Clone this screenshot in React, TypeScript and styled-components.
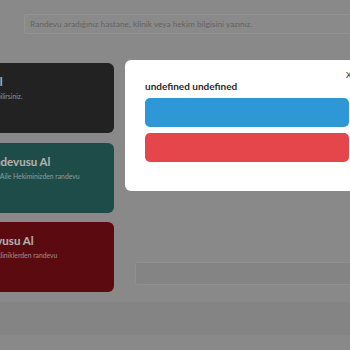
import styled, { createGlobalStyle } from "styled-components";

const GlobalStyle = createGlobalStyle`
  html, body {
    margin: 0;
    padding: 0;
    background: #c5c5c5;
    font-family: Lato, "Open Sans", sans-serif;
    overflow: hidden;
  }
`;

const Page = styled.div`
  position: relative;
  width: 350px;
  height: 350px;
  overflow: hidden;
  background: #c5c5c5;
`;

const Header = styled.div`
  height: 45px;
  padding: 11px 0 0 24px;
  box-sizing: border-box;
`;

const Search = styled.input`
  width: 360px;
  height: 20px;
  box-sizing: border-box;
  border: 1px solid #d3d3d3;
  border-radius: 3px;
  background: #c6c6c6;
  padding: 0 5px;
  font-family: Lato, sans-serif;
  font-size: 8.3px;
  outline: none;

  &::placeholder {
    color: #8e8e8e;
  }
`;

const Main = styled.div`
  display: grid;
  grid-template-columns: 209px 240px;
  column-gap: 21px;
  margin-left: -95px;
  padding-top: 18px;
`;

const CardList = styled.div`
  display: flex;
  flex-direction: column;
  gap: 9.5px;
`;

const Card = styled.div<{ $bg: string }>`
  height: 70px;
  box-sizing: border-box;
  padding: 12px 20px 12px 14px;
  border-radius: 6px;
  background: ${(p) => p.$bg};
  color: #ffffff;
  overflow: hidden;
`;

const CardTitle = styled.div`
  font-size: 11.5px;
  font-weight: 700;
  line-height: 14px;
  white-space: nowrap;
`;

const CardText = styled.p`
  margin: 2px 0 0;
  font-size: 6.8px;
  line-height: 10px;
  color: rgba(255, 255, 255, 0.75);
`;

const Line = styled.span`
  display: block;
  white-space: nowrap;
`;

const Side = styled.div`
  padding-top: 199px;
`;

const NoteBox = styled.div`
  height: 21px;
  border: 1px solid #cdcdcd;
  border-radius: 3px;
  background: #bdbdbd;
`;

const Footer = styled.div`
  margin-top: 10px;
  height: 33px;
  background: #bdbdbd;
`;

const Backdrop = styled.div`
  position: absolute;
  inset: 0;
  background: rgba(0, 0, 0, 0.3);
`;

const Modal = styled.div`
  position: absolute;
  left: 125px;
  top: 60px;
  width: 244px;
  height: 131px;
  box-sizing: border-box;
  padding: 20px 20px 0;
  background: #ffffff;
  border-radius: 6px;
  display: flex;
  flex-direction: column;
  gap: 6px;
`;

const Close = styled.span`
  position: absolute;
  top: 8px;
  right: 17px;
  font-size: 11px;
  color: #555;
  font-family: "DejaVu Sans", sans-serif;
`;

const ModalTitle = styled.div`
  font-size: 10px;
  font-weight: 700;
  color: #2b2b2b;
  line-height: 12px;
`;

const ActionButton = styled.button<{ $bg: string }>`
  height: 29px;
  border: none;
  border-radius: 5px;
  background: ${(p) => p.$bg};
  cursor: pointer;
`;

const cards = [
  {
    bg: "#313131",
    title: "Hızlı Randevu Al",
    lines: ["Hemen online randevu alabilirsiniz."],
  },
  {
    bg: "#2c6e68",
    title: "Aile Hekimi Randevusu Al",
    lines: ["Sistemde kayıtlı olduğunuz Aile Hekiminizden randevu", "alabilirsiniz."],
  },
  {
    bg: "#831117",
    title: "Hastane Randevusu Al",
    lines: ["Devlet hastaneleri ve özel kliniklerden randevu", "alabilirsiniz."],
  },
];

export default function App() {
  const user: any = {};
  return (
    <Page>
      <GlobalStyle />
      <Header>
        <Search placeholder="Randevu aradığınız hastane, klinik veya hekim bilgisini yazınız." />
      </Header>
      <Main>
        <CardList>
          {cards.map((c) => (
            <Card key={c.title} $bg={c.bg}>
              <CardTitle>{c.title}</CardTitle>
              <CardText>
                {c.lines.map((l) => (
                  <Line key={l}>{l}</Line>
                ))}
              </CardText>
            </Card>
          ))}
        </CardList>
        <Side>
          <NoteBox />
        </Side>
      </Main>
      <Footer />
      <Backdrop />
      <Modal>
        <Close>x</Close>
        <ModalTitle>
          {String(user.name)} {String(user.surname)}
        </ModalTitle>
        <ActionButton $bg="#2e97d6" />
        <ActionButton $bg="#e4464b" />
      </Modal>
    </Page>
  );
}
